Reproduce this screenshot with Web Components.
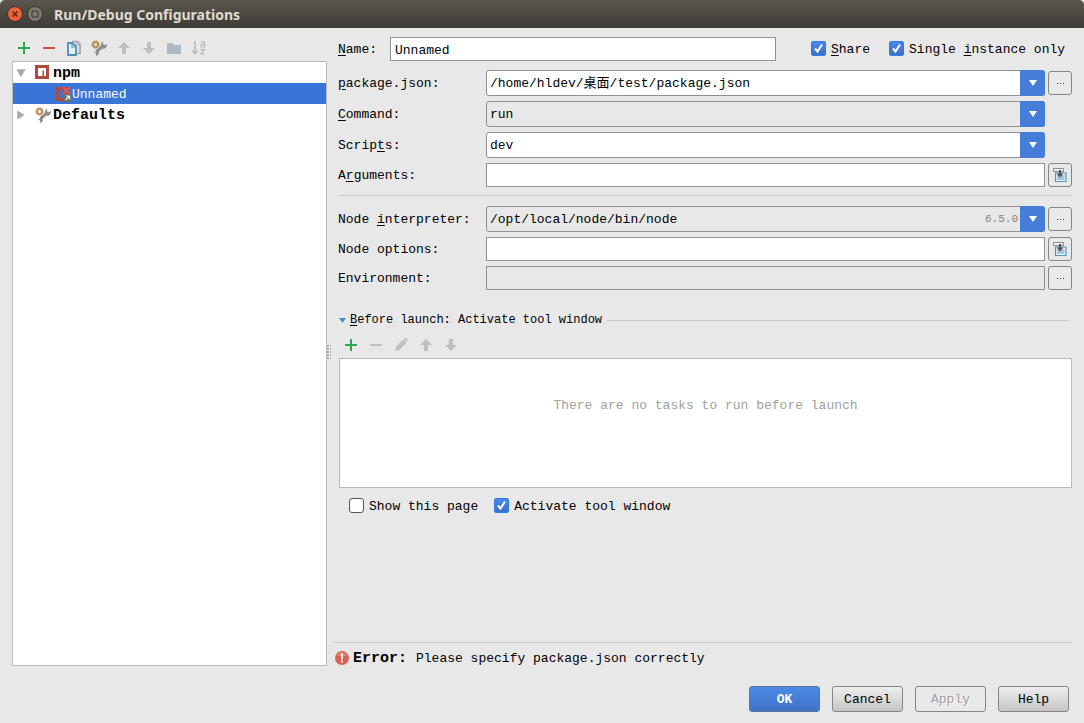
<!DOCTYPE html>
<html lang="en">
<head>
<meta charset="utf-8">
<title>Run/Debug Configurations</title>
<style>
html, body { margin: 0; }
body {
  background: #e8e8e8; color: #000;
  --edge: #919191; --rule: #cacaca; --accent: #3875d7; --blue: #467dd8;
  --mono: "Liberation Mono", "Noto Sans CJK SC", monospace;
  font: 13px/20px var(--mono);
}
</style>
</head>
<body>
<dialog-window heading="Run/Debug Configurations">
  <config-sidebar slot="side"></config-sidebar>
  <config-form slot="main"></config-form>
  <push-button slot="actions" primary>OK</push-button>
  <push-button slot="actions">Cancel</push-button>
  <push-button slot="actions" disabled>Apply</push-button>
  <push-button slot="actions">Help</push-button>
</dialog-window>

<script>
const ICONS = {
  add: '<path d="M7 2h2v5h5v2H9v5H7V9H2V7h5z" fill="#2fa64c"/>',
  remove: '<path d="M2 7h12v2H2z" fill="#d0503f"/>',
  removeOff: '<path d="M2 7h12v2H2z" fill="#bfbfbf"/>',
  copy: '<path d="M6 1.500h5.500L14 4v9.500h-3" fill="#e8e8e8" stroke="#a2a2a2" stroke-width="1.600"/><path d="M10.500 1v4H14" fill="none" stroke="#a2a2a2"/><path d="M2 3h4.500L10 6.500V15H2z" fill="#e4f0f7" stroke="#4f8fb4" stroke-width="1.800"/><path d="M6 3.500V7h3.500" fill="none" stroke="#4f8fb4" stroke-width="1.200"/>',
  tools: '<path d="M5.500 11.500 11.500 6.500" stroke="#8b8b8b" stroke-width="3"/><path d="M12.500 1.500 11.800 4.200l1.500 1 2.500-1.200c.5 3-1.500 5-4 4.600S8.500 3.500 12.500 1.500z" fill="#8b8b8b"/><path d="M2 11.500l2.500.8 1-2.300c2.500.5 3.200 3 1.500 5L4.800 16l.5-2.200z" fill="#8b8b8b"/><circle cx="4.500" cy="4.500" r="2.500" fill="none" stroke="#c08f52" stroke-width="2"/><circle cx="4.500" cy="4.500" r="3.700" fill="none" stroke="#b98340" stroke-dasharray="1.500 1.400"/>',
  up: '<path d="M8 2l6 6h-4v6H6V8H2z" fill="#bfbfbf"/>',
  down: '<path d="M8 14l6-6h-4V2H6v6H2z" fill="#bfbfbf"/>',
  folder: '<path d="M1 3h6l1 2h7v9H1z" fill="#b0b8bf"/>',
  sort: '<path d="M4 1v12M1 10.500l3 3 3-3" fill="none" stroke="#b8b8b8" stroke-width="1.500"/><path d="M10 1.800h2.500l1 1v4.200h-3.500V4.500h3.500M9.500 9.500h4L9.800 14h4.200" fill="none" stroke="#b8b8b8" stroke-width="1.200"/>',
  npm: '<path d="M0 0h14v14H0z" fill="#b04a3f"/><path d="M3 3h8v8H9V5.500H7.500V11H3z" fill="#fff"/>',
  npmBroken: '<path d="M0 1h13v14H0z" fill="#b04a3f"/><path d="M3 4h7v8H3z" fill="#3875d7"/><path d="M7 1l7 7M14 1L7 8" stroke="#e2554c" stroke-width="2.400"/><path d="M8 8h7v8H8z" fill="#6e6e6e"/><path d="M9.500 14l3.500-3.500M10 10h3.500v3.500" fill="none" stroke="#eee" stroke-width="1.200"/>',
  open: '<path d="M2 3h12L8 14z" fill="#a8a8a8"/>',
  closed: '<path d="M3 2v12l10-6z" fill="#a8a8a8"/>',
  pencil: '<path d="M2 14l1-4 7-7.500 3.500 3L6.500 13z" fill="#bfbfbf"/><path d="M10.800 2l1-1h1.500l1.200 1.200v1.500l-1 1z" fill="#bfbfbf"/>',
  expand: '<path d="M3.500 6h10.500v8.500H3.500z" fill="#eef3f5" stroke="#4a98c0" stroke-width="1.200"/><path d="M5 8h7.500v5H5z" fill="#a8c6d8"/><path d="M1.500 1.500h10v3h-10z" fill="#f4f4f4" stroke="#8a8a8a"/><path d="M7 3h2v3.500h2.500L8 10.500l-3.500-4H7z" fill="#555"/>',
  error: '<circle cx="8" cy="7" r="7" fill="#dd6055"/><path d="M2.500 5a6 6 0 0 1 11 0z" fill="#e58579"/><path d="M7 2.500h2v6H7zM7 9.500h2v2H7z" fill="#fff"/>'
};

const SHEET = '*{box-sizing:border-box}input,button,select{font:inherit;color:inherit;margin:0}.key{text-decoration:underline;text-underline-offset:2px}';

class Part extends HTMLElement {
  connectedCallback() {
    if (this.shadowRoot) return;
    const t = document.createElement('template');
    t.innerHTML = '<style>' + SHEET + this.css() + '</style>' + this.markup();
    this.attachShadow({ mode: 'open' }).append(t.content.cloneNode(true));
  }
  attr(name) { return this.getAttribute(name) || ''; }
  /* An underscore marks the letter that is the keyboard mnemonic. */
  mnemonic(text) { return text.replace(/_(.)/, '<span class="key">$1</span>'); }
}

customElements.define('ui-icon', class extends Part {
  css() { return ':host{display:block;flex:none;width:16px;height:16px}svg{display:block;width:100%;height:100%}'; }
  markup() { return '<svg viewBox="0 0 16 16" aria-hidden="true">' + ICONS[this.attr('name')] + '</svg>'; }
});

customElements.define('tool-button', class extends Part {
  css() { return ':host{display:block}button{display:block;border:0;padding:0;background:none}'; }
  markup() {
    return `<button type="button" aria-label="${this.attr('hint')}" ${this.hasAttribute('off') ? 'disabled' : ''}><ui-icon name="${this.attr('icon')}"></ui-icon></button>`;
  }
});

customElements.define('tool-strip', class extends Part {
  css() { return ':host{display:flex;align-items:center;gap:9px;height:24px;padding:0 0 2px 4px}'; }
  markup() { return '<slot></slot>'; }
});

customElements.define('push-button', class extends Part {
  css() {
    return `:host{display:block;width:71px}
    button{display:block;width:100%;height:26px;padding:2px 0 0;border:1px solid #868686;border-radius:3px;background:linear-gradient(#ededed,#c6c6c6)}
    :host([primary]) button{background:linear-gradient(#4c89e6,#4073c9);border-color:#5c7298;color:#fff;font-weight:bold}
    :host([disabled]) button{background:#e9e9e9;color:#a0a0a0;text-shadow:1px 1px #fff}`;
  }
  markup() { return `<button type="button" ${this.hasAttribute('disabled') ? 'disabled' : ''}><slot></slot></button>`; }
});

customElements.define('check-box', class extends Part {
  css() {
    return `:host{display:block}
    label{display:flex;align-items:center;gap:5px;white-space:nowrap}
    .box{display:grid;flex:none;padding-bottom:2px}
    .text{padding-top:2px}
    input,svg{grid-area:1/1;width:15px;height:15px}
    input{appearance:none;border:1px solid #555;border-radius:3px;background:#fff}
    input:checked{border-color:#2f7be8;border-radius:2px;background:linear-gradient(#4888e6,#3d70c8)}
    svg{pointer-events:none;visibility:hidden}input:checked+svg{visibility:visible}`;
  }
  markup() {
    return `<label><span class="box"><input type="checkbox" ${this.hasAttribute('checked') ? 'checked' : ''}><svg viewBox="0 0 15 15" aria-hidden="true"><path d="M4 7.500l2.500 3L11 3.500" fill="none" stroke="#fff" stroke-width="2"/></svg></span><span class="text">${this.mnemonic(this.attr('label'))}</span></label>`;
  }
});

customElements.define('field-row', class extends Part {
  css() {
    return `:host{display:grid;grid-template-columns:148px minmax(0,1fr) 24px;align-items:center}
    :host([short]){grid-template-columns:52px minmax(0,1fr)}
    label{white-space:nowrap;padding-top:2px}
    input{width:100%;height:24px;padding:2px 4px 0;border:1px solid var(--edge);border-radius:0;background:#fff;outline:0}
    :host([grey]) input,:host([grey]) select{background:#e8e8e8}
    .combo{display:grid;grid-template-columns:minmax(0,1fr) auto 25px;align-items:center;height:26px}
    select{grid-area:1/1/2/4;appearance:none;width:100%;height:26px;padding:2px 28px 0 3px;border:1px solid var(--edge);border-radius:3px;background:#fff;outline:0}
    .note{grid-area:1/2;font-size:11px;color:#808080;pointer-events:none;padding-right:2px}
    .arrow{grid-area:1/3;height:26px;background:var(--blue);border-radius:0 3px 3px 0;pointer-events:none;display:grid;place-items:center}
    .arrow svg{width:8px;height:6px}
    :host(:not([short])) .field{padding-right:3px}
    button{display:grid;place-items:center;width:24px;height:24px;padding:0;border:1px solid #868686;border-radius:3px;background:#e9e9e9}
    .dots{width:7px;height:1px}`;
  }
  markup() {
    const kind = this.attr('kind'), value = this.attr('value'), act = this.attr('action');
    const field = kind === 'combo'
      ? `<div class="combo"><select id="f"><option>${value}</option></select><span class="note">${this.attr('note')}</span><span class="arrow"><svg viewBox="0 0 8 6" aria-hidden="true"><path d="M0 0h8L4 6z" fill="#fff"/></svg></span></div>`
      : `<input id="f" type="text" value="${value}" ${this.hasAttribute('grey') ? 'readonly' : ''}>`;
    const face = act === 'browse'
      ? '<svg class="dots" viewBox="0 0 7 1" aria-hidden="true"><path d="M0 0h1v1H0zM3 0h1v1H3zM6 0h1v1H6z" fill="#333"/></svg>'
      : '<ui-icon name="expand"></ui-icon>';
    return `<label for="f">${this.mnemonic(this.attr('label'))}</label><div class="field">${field}</div>` +
      (act ? `<button type="button" aria-label="${act}">${face}</button>` : '');
  }
});

customElements.define('tree-item', class extends Part {
  css() {
    return `:host{display:flex;align-items:center;height:21px;white-space:nowrap}
    .twist{width:16px;display:grid;place-items:center}.twist ui-icon{width:12px;height:12px}
    .icon{margin-left:6px}
    .text{padding-top:2px}
    :host([group]){font-size:15px;font-weight:bold}:host([group]) .text{margin-left:2px}
    :host([child]) .icon{margin-left:27px}
    :host([selected]){background:var(--accent);color:#fff}`;
  }
  markup() {
    const t = this.attr('twist');
    return `<span class="twist">${t ? `<ui-icon name="${t}"></ui-icon>` : ''}</span><ui-icon class="icon" name="${this.attr('icon')}"></ui-icon><span class="text"><slot></slot></span>`;
  }
});

customElements.define('config-sidebar', class extends Part {
  css() {
    return `:host{display:flex;flex-direction:column}
    .tree{flex:1;border:1px solid #b9b9b9;background:#fff}`;
  }
  markup() {
    return `<tool-strip>
      <tool-button icon="add" hint="Add"></tool-button><tool-button icon="remove" hint="Remove"></tool-button>
      <tool-button icon="copy" hint="Copy"></tool-button><tool-button icon="tools" hint="Edit defaults"></tool-button>
      <tool-button icon="up" hint="Move up" off></tool-button><tool-button icon="down" hint="Move down" off></tool-button>
      <tool-button icon="folder" hint="New folder" off></tool-button><tool-button icon="sort" hint="Sort" off></tool-button>
    </tool-strip>
    <div class="tree" role="tree">
      <tree-item group role="treeitem" twist="open" icon="npm">npm</tree-item>
      <tree-item child selected role="treeitem" icon="npmBroken">Unnamed</tree-item>
      <tree-item group role="treeitem" twist="closed" icon="tools">Defaults</tree-item>
    </div>`;
  }
});

customElements.define('launch-tasks', class extends Part {
  css() {
    return `:host{display:block;margin-top:20px}
    .head{display:flex;align-items:center;font-size:12px;white-space:nowrap;padding-right:3px}
    .head svg{width:7px;height:5px;margin:0 4px 0 1px}
    .head::after{content:"";flex:1;height:1px;margin-left:5px;background:var(--rule)}
    tool-strip{margin:4px 0 0 1px}
    .list{height:130px;margin-left:1px;padding-top:37px;border:1px solid #b9b9b9;background:#fff;color:#a0a0a0;text-align:center}
    .checks{display:flex;gap:16px;padding:7px 0 0 11px}`;
  }
  markup() {
    return `<div class="head"><svg viewBox="0 0 7 5" aria-hidden="true"><path d="M0 0h7L3.500 5z" fill="#3f93c6"/></svg><span>${this.mnemonic('_Before launch: Activate tool window')}</span></div>
    <tool-strip>
      <tool-button icon="add" hint="Add task"></tool-button><tool-button icon="removeOff" hint="Remove task" off></tool-button>
      <tool-button icon="pencil" hint="Edit task" off></tool-button><tool-button icon="up" hint="Move task up" off></tool-button>
      <tool-button icon="down" hint="Move task down" off></tool-button>
    </tool-strip>
    <div class="list">There are no tasks to run before launch</div>
    <div class="checks"><check-box label="Show this page"></check-box><check-box label="Activate tool window" checked></check-box></div>`;
  }
});

customElements.define('error-line', class extends Part {
  css() {
    return `:host{display:flex;align-items:center;height:24px;padding-top:8px;border-top:1px solid var(--rule);white-space:nowrap}
    b{font-size:15px;margin:0 9px 0 3px}`;
  }
  markup() { return '<ui-icon name="error"></ui-icon><b>Error:</b><span><slot></slot></span>'; }
});

customElements.define('config-form', class extends Part {
  css() {
    return `:host{display:flex;flex-direction:column}
    .fields{padding-left:4px}
    .top{display:grid;grid-template-columns:minmax(0,1fr) 261px;column-gap:35px;margin-bottom:9px}
    .flags{display:flex;align-items:center;gap:19px}
    .rows{display:grid;gap:5px}
    hr{border:0;height:1px;margin:8px 0 10px;background:var(--rule)}
    error-line{margin-top:auto}`;
  }
  markup() {
    return `<div class="fields">
      <div class="top"><field-row short label="_Name:" value="Unnamed"></field-row>
        <div class="flags"><check-box label="_Share" checked></check-box><check-box label="Single _instance only" checked></check-box></div></div>
      <div class="rows">
        <field-row kind="combo" label="_package.json:" value="/home/hldev/桌面/test/package.json" action="browse"></field-row>
        <field-row kind="combo" grey label="_Command:" value="run"></field-row>
        <field-row kind="combo" label="Scrip_ts:" value="dev"></field-row>
        <field-row label="A_rguments:" action="expand"></field-row>
      </div>
      <hr>
      <div class="rows">
        <field-row kind="combo" grey label="Node _interpreter:" value="/opt/local/node/bin/node" note="6.5.0" action="browse"></field-row>
        <field-row label="Node options:" action="expand"></field-row>
        <field-row grey label="Environment:" action="browse"></field-row>
      </div>
      <launch-tasks></launch-tasks>
    </div>
    <error-line>Please specify package.json correctly</error-line>`;
  }
});

customElements.define('dialog-window', class extends Part {
  css() {
    return `:host{display:flex;flex-direction:column;min-height:100vh}
    header{display:flex;align-items:center;gap:4px;height:28px;padding-left:7px;background:linear-gradient(#5a564d,#3e3c37);border-radius:5px 5px 0 0;color:#dfdbd2}
    h1{margin:0 0 0 7px;padding-top:2px;font:bold 14px/20px "Noto Sans","Open Sans",sans-serif}
    header button{padding:0;border:0;background:none;display:block}
    header svg{display:block;width:16px;height:16px}
    main{flex:1;display:grid;grid-template-columns:315px 7px minmax(0,1fr);padding:9px 12px 0}
    .grip{align-self:center;width:4px;height:14px;margin-right:2px;background:radial-gradient(circle at 1px 1px,#b4b4b4 1px,transparent 1px) 0 0/3px 3px}
    footer{display:flex;justify-content:flex-end;gap:12px;padding:20px 15px 11px}`;
  }
  markup() {
    return `<header>
      <button type="button" aria-label="Close"><svg viewBox="0 0 16 16"><circle cx="8" cy="8" r="7.500" fill="#ee6238" stroke="#37352f"/><path d="M5.500 5.500l5 5M10.500 5.500l-5 5" stroke="#5a2312" stroke-width="1.400"/></svg></button>
      <button type="button" aria-label="Maximize"><svg viewBox="0 0 16 16"><circle cx="8" cy="8" r="7.500" fill="#7d7a72" stroke="#37352f"/><path d="M5 5h6v6H5z" fill="none" stroke="#3a3833"/></svg></button>
      <h1>${this.attr('heading')}</h1></header>
    <main><slot name="side"></slot><div class="grip"></div><slot name="main"></slot></main>
    <footer><slot name="actions"></slot></footer>`;
  }
});
</script>
</body>
</html>
